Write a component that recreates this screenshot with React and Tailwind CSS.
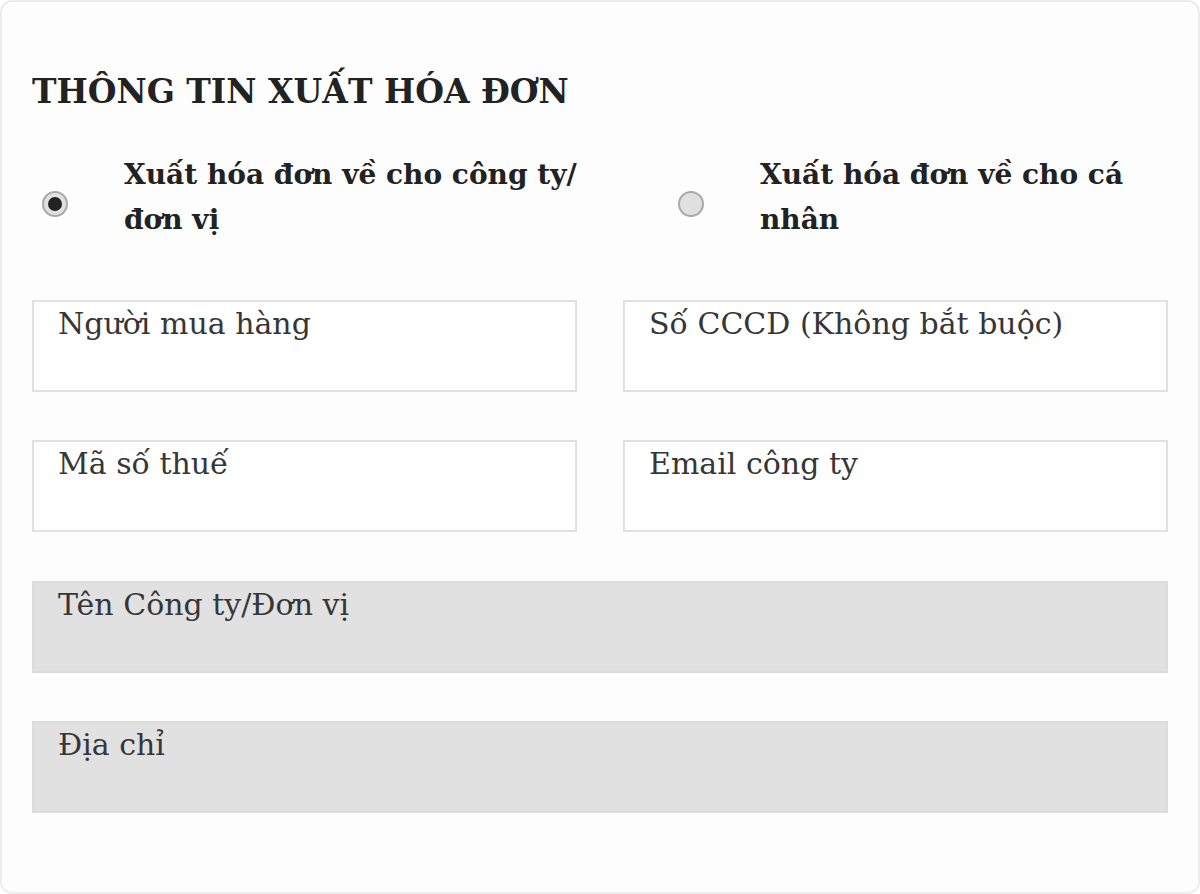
const fields = [
  { id: "buyer", label: "Người mua hàng" },
  { id: "cccd", label: "Số CCCD (Không bắt buộc)" },
  { id: "tax", label: "Mã số thuế" },
  { id: "email", label: "Email công ty" },
];

const wideFields = [
  { id: "company", label: "Tên Công ty/Đơn vị", mt: "mt-[49px]" },
  { id: "address", label: "Địa chỉ", mt: "mt-[48px]" },
];

const Radio = ({ checked }) => (
  <span className="mt-[14px] w-[26px] h-[26px] rounded-full border-[2px] border-[#a9a9a9] bg-[#e0e0e0] flex items-center justify-center shrink-0">
    {checked && <span className="w-[14px] h-[14px] rounded-full bg-[#222]" />}
  </span>
);

export default function App() {
  return (
    <div
      className="w-[1200px] h-[894px] bg-white"
      style={{ fontFamily: '"DejaVu Serif", "Liberation Serif", serif' }}
    >
      <div className="w-[1200px] h-[894px] border-2 border-[#ececec] rounded-[12px] bg-[#fdfdfd] px-[30px] pt-[66px]">
        {/* TITLE */}
        <h1 className="text-[33px] leading-[48px] font-bold text-[#222]">
          THÔNG TIN XUẤT HÓA ĐƠN
        </h1>

        {/* RADIO */}
        <div className="grid grid-cols-2 gap-[46px] mt-[36px]">
          <label className="flex items-center pl-[10px]">
            <Radio checked />
            <span className="ml-[56px] text-[28px] leading-[45px] font-bold text-[#222]">
              Xuất hóa đơn về cho công ty/ đơn vị
            </span>
          </label>
          <label className="flex items-center pl-[55px]">
            <Radio />
            <span className="ml-[56px] text-[28px] leading-[45px] font-bold text-[#222]">
              Xuất hóa đơn về cho cá nhân
            </span>
          </label>
        </div>

        {/* INPUTS */}
        <div className="grid grid-cols-2 gap-x-[46px] gap-y-[48px] mt-[58px]">
          {fields.map((f) => (
            <div
              key={f.id}
              className="h-[92px] border-2 border-[#e1e1e1] bg-white px-[24px] text-[30px] leading-[44px] text-[#363636]"
            >
              {f.label}
            </div>
          ))}
        </div>

        {wideFields.map((f) => (
          <div
            key={f.id}
            className={`h-[92px] ${f.mt} border-2 border-[#dcdcdc] bg-[#e1e1e1] px-[24px] text-[30px] leading-[44px] text-[#363636]`}
          >
            {f.label}
          </div>
        ))}
      </div>
    </div>
  );
}
